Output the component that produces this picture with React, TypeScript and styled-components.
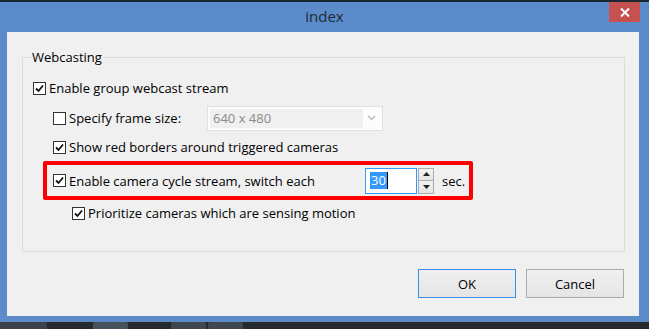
import React from 'react';
import styled, { createGlobalStyle } from 'styled-components';

const GlobalStyle = createGlobalStyle`
  html, body {
    margin: 0;
    padding: 0;
    background: #1f2326;
  }
  body {
    font-family: "Open Sans", "Noto Sans", sans-serif;
    font-size: 13px;
    color: #000;
  }
`;

const Screen = styled.div`
  width: 649px;
  height: 329px;
  overflow: hidden;
  display: flex;
  flex-direction: column;
  background: #24282c;
`;

const TopEdge = styled.div`
  height: 2px;
  background: #1d2733;
`;

const Window = styled.div`
  display: flex;
  flex-direction: column;
  background: #5b8bc9;
`;

const TitleBar = styled.div`
  display: grid;
  grid-template-columns: 1fr auto 1fr;
  height: 30px;
`;

const Title = styled.div`
  grid-column: 2;
  align-self: center;
  font-size: 15px;
  color: #1f2a36;
  margin-top: -2px;
`;

const CloseBtn = styled.div`
  grid-column: 3;
  justify-self: end;
  align-self: start;
  width: 31px;
  height: 20px;
  margin-right: 9px;
  background: #c75050;
  display: flex;
  align-items: center;
  justify-content: center;
`;

const Frame = styled.div`
  padding: 0 10px 6px 7px;
`;

const Client = styled.div`
  height: 284px;
  box-sizing: border-box;
  background: #f0f0f0;
  padding: 25px 14px 0 15px;
`;

const GroupBox = styled.div`
  position: relative;
  height: 195px;
  box-sizing: border-box;
  border: 1px solid #dcdcdc;
  padding-top: 15px;
`;

const Legend = styled.span`
  position: absolute;
  top: -10px;
  left: 8px;
  padding: 0 1px;
  background: #f0f0f0;
  line-height: 18px;
`;

const Row = styled.div<{ $indent: number; $height: number }>`
  display: flex;
  align-items: center;
  height: ${(p) => p.$height}px;
  padding-left: ${(p) => p.$indent}px;
`;

const Highlight = styled.div`
  display: flex;
  align-items: center;
  width: 430px;
  height: 39px;
  box-sizing: border-box;
  margin-left: 20px;
  border: 4px solid #ff0000;
  border-radius: 2px;
  padding-left: 6px;
`;

const Box = styled.span`
  width: 13px;
  height: 13px;
  box-sizing: border-box;
  border: 1px solid #333;
  background: #fff;
  display: inline-flex;
  align-items: center;
  justify-content: center;
  flex-shrink: 0;
`;

const Label = styled.span<{ $width?: number }>`
  margin-left: 3px;
  white-space: nowrap;
  ${(p) => (p.$width ? `width: ${p.$width}px;` : '')}
`;

const Combo = styled.div`
  display: flex;
  align-items: center;
  width: 176px;
  height: 25px;
  box-sizing: border-box;
  border: 1px solid #e1e1e1;
  background: #fcfcfc;
  padding: 2px;
`;

const ComboValue = styled.div`
  width: 153px;
  height: 19px;
  background: #f0f0f0;
  color: #8a8a8a;
  padding-left: 3px;
  box-sizing: border-box;
  line-height: 19px;
`;

const ComboArrow = styled.div`
  flex: 1;
  display: flex;
  justify-content: center;
`;

const NumberField = styled.div`
  width: 52px;
  height: 26px;
  box-sizing: border-box;
  border: 1px solid #3399ff;
  background: #fff;
  display: flex;
  align-items: center;
  padding-left: 4px;
`;

const Selected = styled.span`
  background: #3399ff;
  color: #fff;
  line-height: 17px;
  padding: 0 1px;
`;

const Caret = styled.span`
  width: 1px;
  height: 17px;
  background: #000;
`;

const Spinner = styled.div`
  display: flex;
  flex-direction: column;
  width: 16px;
  height: 26px;
  margin-left: 1px;
`;

const SpinBtn = styled.div`
  flex: 1;
  box-sizing: border-box;
  border: 1px solid #acacac;
  background: linear-gradient(#f2f2f2, #e5e5e5);
  display: flex;
  align-items: center;
  justify-content: center;
  & + & {
    border-top: none;
  }
`;

const Unit = styled.span`
  margin-left: 8px;
`;

const ButtonRow = styled.div`
  display: flex;
  justify-content: flex-end;
  gap: 10px;
  margin-top: 17px;
  padding-right: 1px;
`;

const Button = styled.div<{ $default?: boolean }>`
  width: 98px;
  height: 29px;
  box-sizing: border-box;
  border: 1px solid ${(p) => (p.$default ? '#3c8ee6' : '#acacac')};
  background: linear-gradient(#f0f0f0, #e5e5e5);
  display: flex;
  align-items: center;
  justify-content: center;
`;

const Taskbar = styled.div`
  flex: 1;
  display: flex;
  gap: 0;
  background: #262a2e;
`;

const TaskItem = styled.div<{ $width: number; $color: string; $gap: number }>`
  width: ${(p) => p.$width}px;
  margin-left: ${(p) => p.$gap}px;
  background: ${(p) => p.$color};
  border-radius: 2px 2px 0 0;
`;

const Check = () => (
  <svg width="9" height="9" viewBox="0 0 9 9">
    <path d="M1 4.5 L3.5 7 L8 1.5" fill="none" stroke="#111" strokeWidth="1.8" />
  </svg>
);

const CheckBox: React.FC<{ checked?: boolean }> = ({ checked }) => (
  <Box>{checked && <Check />}</Box>
);

const Arrow: React.FC<{ up?: boolean }> = ({ up }) => (
  <svg width="7" height="4" viewBox="0 0 7 4">
    <path d={up ? 'M0 4 L3.5 0 L7 4 Z' : 'M0 0 L3.5 4 L7 0 Z'} fill="#222" />
  </svg>
);

export default function App() {
  return (
    <Screen>
      <GlobalStyle />
      <TopEdge />
      <Window>
        <TitleBar>
          <Title>index</Title>
          <CloseBtn>
            <svg width="10" height="9" viewBox="0 0 10 9">
              <path d="M1 0.5 L9 8.5 M9 0.5 L1 8.5" stroke="#fff" strokeWidth="2" />
            </svg>
          </CloseBtn>
        </TitleBar>
        <Frame>
          <Client>
            <GroupBox>
              <Legend>Webcasting</Legend>

              <Row $indent={10} $height={30}>
                <CheckBox checked />
                <Label>Enable group webcast stream</Label>
              </Row>

              <Row $indent={30} $height={30}>
                <CheckBox />
                <Label $width={138}>Specify frame size:</Label>
                <Combo>
                  <ComboValue>640 x 480</ComboValue>
                  <ComboArrow>
                    <svg width="9" height="6" viewBox="0 0 9 6">
                      <path d="M1 1 L4.5 4.5 L8 1" fill="none" stroke="#b0b0b0" strokeWidth="1.2" />
                    </svg>
                  </ComboArrow>
                </Combo>
              </Row>

              <Row $indent={30} $height={28}>
                <CheckBox checked />
                <Label>Show red borders around triggered cameras</Label>
              </Row>

              <Highlight>
                <CheckBox checked />
                <Label $width={296}>Enable camera cycle stream, switch each</Label>
                <NumberField>
                  <Selected>30</Selected>
                  <Caret />
                </NumberField>
                <Spinner>
                  <SpinBtn>
                    <Arrow up />
                  </SpinBtn>
                  <SpinBtn>
                    <Arrow />
                  </SpinBtn>
                </Spinner>
                <Unit>sec.</Unit>
              </Highlight>

              <Row $indent={49} $height={26}>
                <CheckBox checked />
                <Label>Prioritize cameras which are sensing motion</Label>
              </Row>
            </GroupBox>

            <ButtonRow>
              <Button $default>OK</Button>
              <Button>Cancel</Button>
            </ButtonRow>
          </Client>
        </Frame>
      </Window>
      <Taskbar>
        <TaskItem $width={47} $color="#3b4148" $gap={0} />
        <TaskItem $width={35} $color="#48525c" $gap={46} />
        <TaskItem $width={35} $color="#3e464e" $gap={43} />
        <TaskItem $width={35} $color="#3e464e" $gap={2} />
      </Taskbar>
    </Screen>
  );
}
